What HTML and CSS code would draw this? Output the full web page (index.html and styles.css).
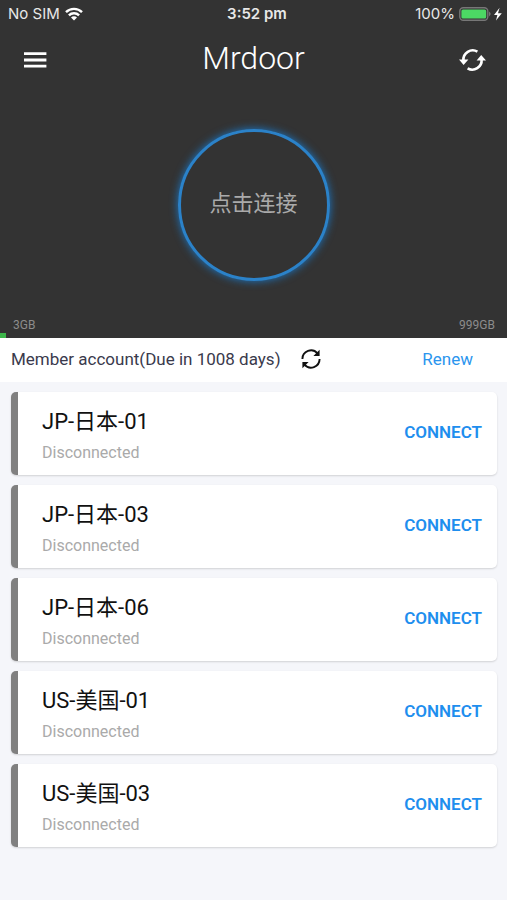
FILE: index.html
```html
<!DOCTYPE html>
<html lang="en">
<head>
    <meta charset="UTF-8">
    <meta name="viewport" content="width=device-width, initial-scale=1">
    <title>Mrdoor</title>
    <link rel="stylesheet" href="styles.css">
</head>
<body>
    <header class="top">
        <div class="status-bar">
            <div class="status-left">
                <span>No SIM</span>
                <svg width="18" height="14" viewBox="0 0 18 14" fill="none" stroke="#fff" stroke-width="2.4">
                    <path d="M1 5.2a11.3 11.3 0 0 1 16 0M3.9 8.4a7.2 7.2 0 0 1 10.2 0"/>
                    <path d="M6 10.6a4.2 4.2 0 0 1 6 0l-3 3z" fill="#fff" stroke="none"/>
                </svg>
            </div>
            <span class="clock">3:52 pm</span>
            <div class="status-right">
                <span>100%</span>
                <svg width="43" height="14" viewBox="0 0 43 14">
                    <rect x="0.8" y="0.8" width="28" height="12.4" rx="3.5" fill="none" stroke="#777" stroke-width="1.4"/>
                    <rect x="2.4" y="2.4" width="24.8" height="9.2" rx="1.6" fill="#4cd964"/>
                    <path d="M30 4.6q3.4 2.4 0 4.8z" fill="#777"/>
                    <path d="M40.6 0.8L35 8h3.4L37 13.4l5.8-7.2H39z" fill="#fff"/>
                </svg>
            </div>
        </div>
        <nav class="nav-bar">
            <button class="icon-button" aria-label="Menu">
                <svg width="30" height="28" viewBox="0 0 30 28" stroke="#fff" stroke-width="2.8">
                    <path d="M4 7.6h22.4M4 14h22.4M4 20.2h22.4"/>
                </svg>
            </button>
            <h1>Mrdoor</h1>
            <button class="icon-button" aria-label="Refresh servers">
                <svg width="30" height="28" viewBox="0 0 30 28" fill="none" stroke="#fff" stroke-width="2.6">
                    <path d="M20.4 5.6A9.4 9.4 0 0 0 6.4 14.5M10.6 22.4A9.4 9.4 0 0 0 24.6 13.5"/>
                    <path d="M2 13.6h9.4l-4.8 5.4zM19.6 14.4H29l-4.8-5.4z" fill="#fff" stroke="none"/>
                </svg>
            </button>
        </nav>
        <div class="dial">
            <button class="connect-circle">点击连接</button>
        </div>
        <div class="usage">
            <span>3GB</span>
            <span>999GB</span>
        </div>
        <div class="usage-bar"></div>
    </header>

    <section class="account">
        <span>Member account(Due in 1008 days)</span>
        <button class="reload-button" aria-label="Refresh account">
            <svg width="20" height="20" viewBox="0 0 20 20" fill="none" stroke="#111" stroke-width="1.9">
                <path d="M1.4 10A8.6 8.6 0 0 1 16.5 4.4M18.6 10A8.6 8.6 0 0 1 3.5 15.6"/>
                <path d="M18.6 0.8v6.2h-6.2zM1.4 19.2v-6.2h6.2z" fill="#111" stroke="none"/>
            </svg>
        </button>
        <a class="renew" href="#">Renew</a>
    </section>

    <main class="servers">
        <div class="server">
            <div class="server-info">
                <h2>JP-日本-01</h2>
                <p>Disconnected</p>
            </div>
            <button class="connect">CONNECT</button>
        </div>
        <div class="server">
            <div class="server-info">
                <h2>JP-日本-03</h2>
                <p>Disconnected</p>
            </div>
            <button class="connect">CONNECT</button>
        </div>
        <div class="server">
            <div class="server-info">
                <h2>JP-日本-06</h2>
                <p>Disconnected</p>
            </div>
            <button class="connect">CONNECT</button>
        </div>
        <div class="server">
            <div class="server-info">
                <h2>US-美国-01</h2>
                <p>Disconnected</p>
            </div>
            <button class="connect">CONNECT</button>
        </div>
        <div class="server">
            <div class="server-info">
                <h2>US-美国-03</h2>
                <p>Disconnected</p>
            </div>
            <button class="connect">CONNECT</button>
        </div>
    </main>
</body>
</html>
```
FILE: styles.css
```css
* {
    box-sizing: border-box;
}
body {
    margin: 0;
    font-family: Roboto, "Noto Sans CJK SC", sans-serif;
    background-color: #f5f6fa;
    color: #111;
}
h1, h2, p {
    margin: 0;
    font-weight: 400;
}
button {
    padding: 0;
    border: none;
    background: none;
    font-family: inherit;
    cursor: pointer;
}
svg {
    display: block;
}

/* Dark header */
.top {
    background-color: #333;
    color: #fff;
}
.status-bar {
    display: grid;
    grid-template-columns: 1fr auto 1fr;
    align-items: center;
    height: 27px;
    padding: 0 5px 0 8px;
    font-family: Inter, sans-serif;
    font-size: 15px;
    color: #e8e8e8;
}
.status-left, .status-right {
    display: flex;
    align-items: center;
    gap: 5px;
}
.status-right {
    justify-content: flex-end;
    gap: 4px;
}
.clock {
    padding-left: 4px;
    font-weight: 600;
}
.nav-bar {
    display: flex;
    align-items: center;
    justify-content: space-between;
    height: 65px;
    padding: 0 20px;
}
.nav-bar h1 {
    padding-bottom: 4px;
    font-size: 32px;
    font-weight: 300;
}
.dial {
    display: flex;
    justify-content: center;
    padding: 37px 0;
}
.connect-circle {
    width: 152px;
    height: 152px;
    padding-bottom: 8px;
    border: 3px solid #2b82c9;
    border-radius: 50%;
    box-shadow: 0 0 8px #1a78c8;
    color: #aaa;
    font-size: 22px;
}
.usage {
    display: flex;
    justify-content: space-between;
    padding: 0 12px 0 13px;
    font-size: 12px;
    line-height: 15px;
    color: #8c8c8c;
}
.usage-bar {
    width: 6px;
    height: 5px;
    background-color: #3cb54a;
}

/* Account row */
.account {
    display: flex;
    align-items: center;
    height: 44px;
    padding: 0 34px 2px 11px;
    background-color: #fff;
    font-size: 17px;
    color: #3a3a4c;
}
.reload-button {
    margin-left: 20px;
}
.renew {
    margin-left: auto;
    color: #2b95ee;
    text-decoration: none;
}

/* Server list */
.servers {
    display: flex;
    flex-direction: column;
    gap: 10px;
    padding: 10px 10px 10px 11px;
}
.server {
    display: flex;
    align-items: center;
    justify-content: space-between;
    padding: 14px 15px 7px 24px;
    border-left: 7px solid #808080;
    border-radius: 5px;
    background-color: #fff;
    box-shadow: 0 1px 2px rgba(0, 0, 0, 0.15);
}
.server h2 {
    font-size: 22px;
    line-height: 32px;
}
.server p {
    font-size: 16px;
    line-height: 30px;
    color: #aaa;
}
.connect {
    padding-bottom: 10px;
    font-size: 17px;
    font-weight: 600;
    color: #1e8eee;
}
```
